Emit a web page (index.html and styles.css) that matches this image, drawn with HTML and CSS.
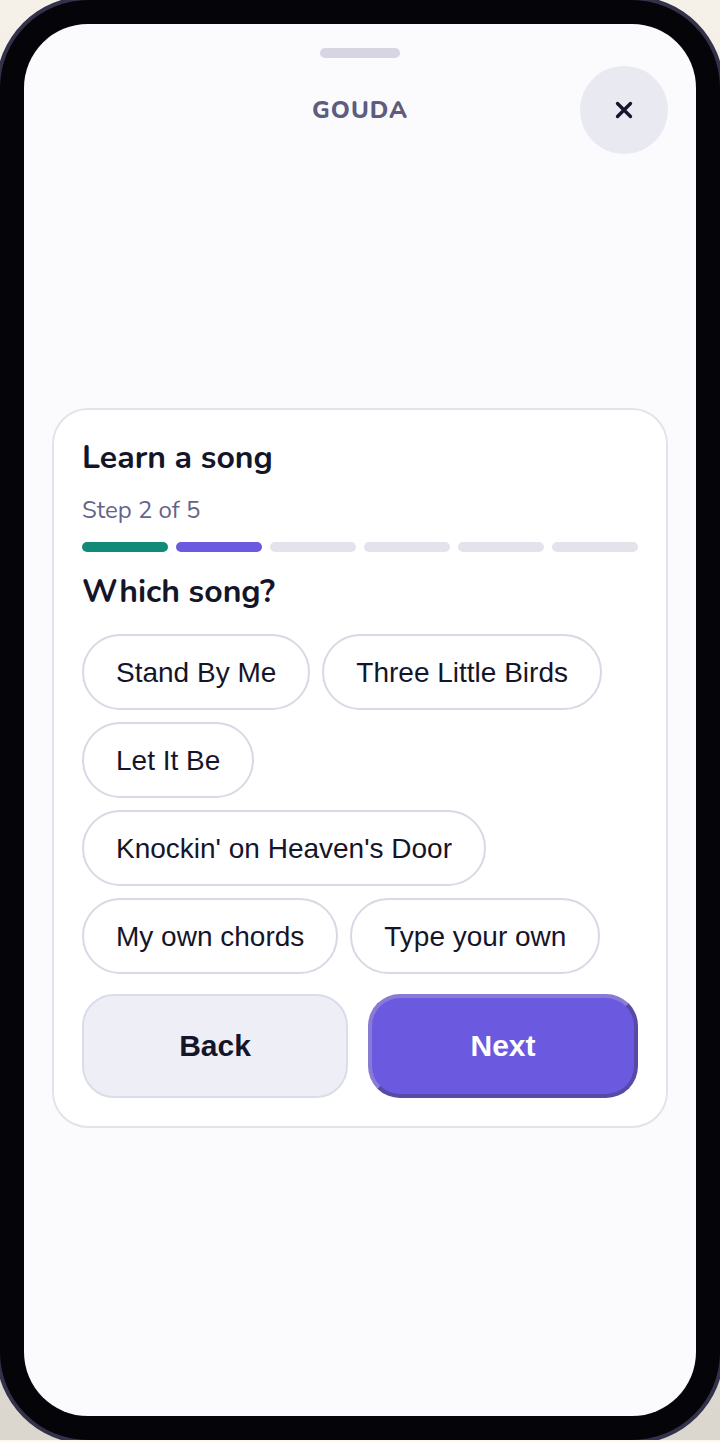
FILE: index.html
```html
<!DOCTYPE html>
<html lang="en">
<head>
    <meta charset="UTF-8">
    <meta name="viewport" content="width=device-width, initial-scale=1">
    <title>Gouda - Learn a song</title>
    <link rel="stylesheet" href="styles.css">
</head>
<body>
    <div class="stage">
        <div class="phone">
            <div class="screen">
                <div class="handle"></div>
                <header class="topbar">
                    <h1 class="brand">GOUDA</h1>
                    <button type="button" class="close" aria-label="Close">
                        <svg width="18" height="18" viewBox="0 0 18 18" fill="none" stroke="currentColor" stroke-width="3.3" stroke-linecap="round">
                            <path d="M2.5 2.5 15.5 15.5M15.5 2.5 2.5 15.5"/>
                        </svg>
                    </button>
                </header>

                <main class="content">
                    <section class="card">
                        <h2 class="title">Learn a song</h2>
                        <p class="step">Step 2 of 5</p>
                        <div class="progress">
                            <span class="bar done"></span>
                            <span class="bar current"></span>
                            <span class="bar"></span>
                            <span class="bar"></span>
                            <span class="bar"></span>
                            <span class="bar"></span>
                        </div>
                        <h3 class="title question">Which song?</h3>
                        <div class="chips">
                            <button type="button" class="chip">Stand By Me</button>
                            <button type="button" class="chip">Three Little Birds</button>
                            <button type="button" class="chip">Let It Be</button>
                            <button type="button" class="chip">Knockin' on Heaven's Door</button>
                            <button type="button" class="chip">My own chords</button>
                            <button type="button" class="chip">Type your own</button>
                        </div>
                        <div class="actions">
                            <button type="button" class="btn back">Back</button>
                            <button type="button" class="btn next">Next</button>
                        </div>
                    </section>
                </main>
            </div>
        </div>
    </div>
</body>
</html>
```

FILE: styles.css
```css
*{
    box-sizing: border-box;
}
body{
    margin: 0;
    padding-bottom: 2px;
    background: #fdf7ec;
    color: #15152a;
    font-family: Nunito, Lato, sans-serif;
}
h1, h2, h3, p{
    margin: 0;
}
button{
    font-family: Arial, "Liberation Sans", sans-serif;
    color: #15152a;
    cursor: pointer;
}

/* phone */
.stage{
    display: flex;
    min-height: calc(100vh - 2px);
    overflow: hidden;
    background: linear-gradient(#f6f1e8, #dbd6ce);
}
.phone{
    flex: 1;
    display: flex;
    padding: 24px;
    border-radius: 88px;
    background: #050409;
    box-shadow: 0 0 0 4px #34324a;
}
.screen{
    flex: 1;
    display: flex;
    flex-direction: column;
    padding: 24px 28px 34px;
    border-radius: 64px;
    background: #fbfbfe;
}

/* top bar */
.handle{
    width: 80px;
    height: 10px;
    margin: 0 auto 8px;
    border-radius: 5px;
    background: #d6d5e1;
}
.topbar{
    display: grid;
    grid-template-columns: 1fr auto 1fr;
    align-items: center;
}
.brand{
    grid-column: 2;
    font-size: 24px;
    line-height: 32px;
    font-weight: 800;
    letter-spacing: 1px;
    color: #5e5c80;
}
.close{
    justify-self: end;
    display: flex;
    align-items: center;
    justify-content: center;
    width: 88px;
    height: 88px;
    padding: 0;
    border: 0;
    border-radius: 50%;
    background: #e9e9f2;
}

/* card */
.content{
    flex: 1;
    display: flex;
    flex-direction: column;
    justify-content: center;
}
.card{
    padding: 28px;
    border: 2px solid #e4e3ec;
    border-radius: 36px;
    background: #ffffff;
}
.title{
    font-size: 32px;
    line-height: 40px;
    font-weight: 700;
}
.step{
    margin-top: 16px;
    font-size: 24px;
    line-height: 32px;
    color: #66648a;
}
.progress{
    display: flex;
    gap: 8px;
    margin-top: 16px;
}
.bar{
    flex: 1;
    height: 10px;
    border-radius: 5px;
    background: #e4e3ec;
}
.bar.done{
    background: #128a78;
}
.bar.current{
    background: #6b5ae0;
}
.question{
    margin-top: 20px;
}
.chips{
    display: flex;
    flex-wrap: wrap;
    gap: 12px;
    margin-top: 22px;
}
.chip{
    padding: 21px 32px 19px;
    border: 2px solid #d9d8e5;
    border-radius: 38px;
    background: #ffffff;
    font-size: 28px;
    line-height: 32px;
}

/* buttons */
.actions{
    display: flex;
    gap: 20px;
    margin-top: 20px;
}
.btn{
    flex: 1;
    height: 104px;
    padding: 0 32px;
    border-radius: 32px;
    font-size: 30px;
    font-weight: 700;
}
.back{
    border: 2px solid #dcdce8;
    background: #eeeef6;
}
.next{
    border: 4px solid;
    border-color: #887bd6 #564aa6 #564aa6 #887bd6;
    background: #6b5ae0;
    color: #ffffff;
}
```
